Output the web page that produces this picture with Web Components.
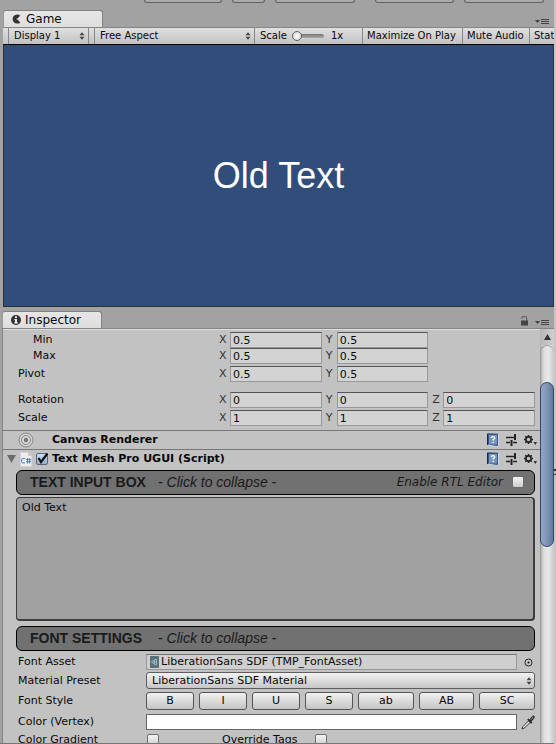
<!DOCTYPE html>
<html lang="en">
<head>
<meta charset="utf-8">
<title>Editor</title>
<style>
html{height:100%}
body{margin:0;height:100%;overflow:hidden;background:#a2a2a2;color:#090909;font:11px/16px "DejaVu Sans",Verdana,sans-serif}
</style>
</head>
<body>
<editor-window></editor-window>
<script>
const base = `*{box-sizing:border-box}button,input,select,textarea{font:inherit;color:inherit;margin:0;border-radius:0}button{padding:0;border:0;background:none}svg{display:block}`;
function define(name, css, html) {
  customElements.define(name, class extends HTMLElement {
    constructor() {
      super();
      const root = this.attachShadow({mode: 'open'});
      const t = document.createElement('template');
      t.innerHTML = `<style>${base}${css}</style>` + (typeof html === 'function' ? html(this) : html);
      root.append(t.content.cloneNode(true));
    }
  });
}
const attr = (el, n, d = '') => el.getAttribute(n) ?? d;

const icons = {
  game: [10, 10, '<path d="M8.300 1.600A4.600 4.600 0 1 0 8.300 8.400L5.500 5.600H4.600V4.500H5.500Z" fill="#333"/>'],
  info: [10, 10, '<circle cx="5" cy="5" r="5" fill="#333"/><path d="M4 1.300h2v1.600H4zM3.300 4H6v3.200h.9v1.200H3.200V7.200H4V5.200h-.7z" fill="#eee"/>'],
  menu: [14, 6, '<path d="M0 1h5L2.500 4z" fill="#444"/><path d="M6 .5h8M6 2.500h8M6 4.500h8" stroke="#444"/>'],
  lock: [9, 10, '<path d="M2 2.800V1.500Q2 .6 3 .6h2.500Q6.600.6 6.600 2v3" fill="none" stroke="#666" stroke-width="1.200"/><path d="M1 4.500h7V9.500H1z" fill="#444"/>'],
  updown: [6, 8, '<path d="M.5 3.200 3 .3 5.500 3.200zM.5 4.800 3 7.700 5.500 4.800z" fill="#444"/>'],
  canvas: [16, 16, '<circle cx="8" cy="8" r="7" fill="#d2d2d2" stroke="#888"/><circle cx="8" cy="8" r="4.500" fill="#d8d8d8" stroke="#888"/><circle cx="8" cy="8" r="2.200" fill="#777"/>'],
  script: [12, 15, '<path d="M.5.5h7.500L11.500 4v10.500H.5z" fill="#ebedf0" stroke="#d4d4d4"/><path d="M8 .5V4h3.500" fill="#c8c8c8"/><path d="M5 6.500H3Q1.500 6.500 1.500 8v1.500Q1.500 11 3 11h2M7.500 6v5.500M9.500 6v5.500M6 7.700h5M6 9.800h5" stroke="#3b7bd2" fill="none" stroke-width=".9"/>'],
  help: [13, 14, '<path d="M1 1Q1 .3 2 .3L12.500.8V12.500L11 13.700 1 12z" fill="#35547f"/><path d="M2 12 11 13.500 12.500 12.400V1" fill="none" stroke="#e6eefb" stroke-width=".8"/><path d="M3 2h8v9.500H3z" fill="#7896bd"/><path d="M1.500 1v11" stroke="#172b48"/><path d="M5.300 5Q5.400 3.700 7 3.700 8.700 3.700 8.700 5 8.700 6 7.200 6.500V7.500M7.200 8.700v1.400" stroke="#fff" fill="none" stroke-width="1.300"/>'],
  preset: [11, 12, '<path d="M0 3.500h6M0 8.500h4M7 8.500h4" stroke="#222" stroke-width="1.400"/><path d="M9 0v6M5.500 6v6" stroke="#222" stroke-width="2"/><path d="M6 3.500h4" stroke="#222" stroke-width="1.400"/>'],
  gear: [13, 11, '<circle cx="4.500" cy="4.500" r="2.600" fill="none" stroke="#222" stroke-width="1.600"/><path d="M4.500 0v2M4.500 7v2M0 4.500h2M7 4.500h2M1.300 1.300 2.700 2.700M6.300 6.300l1.400 1.400M1.300 7.700 2.700 6.300M6.300 2.700l1.400-1.400" stroke="#222" stroke-width="1.500"/><path d="M9.500 7h3.500l-1.700 3z" fill="#333"/>'],
  fold: [9, 8, '<path d="M0 0h9L4.500 8z" fill="#6b6b6b"/>'],
  asset: [9, 12, '<path d="M0 0h9v12H0z" fill="#5c7079"/><path d="M1.500 6 5 3.500h1.500v5H5zM3.500 6h3M4.500 4.300v3.400" fill="none" stroke="#a5c3ca" stroke-width=".9"/>'],
  target: [9, 9, '<circle cx="4.500" cy="4.500" r="3.500" fill="#ccc" stroke="#222"/><circle cx="4.500" cy="4.500" r="1.100" fill="#111"/>'],
  dropper: [14, 15, '<path d="M1 14 2 11.500 8 5.500 9.500 7 3.500 13z" fill="#ececec" stroke="#222" stroke-width=".9"/><path d="M6.800 4.200 10.800 8.200" stroke="#222" stroke-width="1.700"/><path d="M8 5 11 1.300Q12.500 0 13.500 1 14.300 2 13 3.700L10 7z" fill="#333"/><path d="M10 4.500 12.300 2" stroke="#aaa" stroke-width=".8"/>'],
  up: [7, 6, '<path d="M0 6 3.500 0 7 6z" fill="#333"/>'],
  check: [13, 13, '<path d="M2.500 6 5 10 11.500 1.500" fill="none" stroke="#111" stroke-width="2.200"/>']
};
define('ed-icon', ':host{display:block;flex:none;pointer-events:none}', el => {
  const [w, h, body] = icons[attr(el, 'name')];
  return `<svg width="${w}" height="${h}" viewBox="0 0 ${w} ${h}" aria-hidden="true">${body}</svg>`;
});

define('main-toolbar', `:host{display:flex;gap:10px;height:10px;flex:none;padding:0 10px 0 144px}
button{flex:80 1 0;height:3px;border:1px solid #626262;border-top:0;border-radius:0 0 4px 4px;background:#aaa}
.play{flex-grow:78}.step{flex-grow:32}.right{margin-left:10px}`,
'<button class="play" aria-label="Pause"></button><button class="step" aria-label="Step"></button><button aria-label="Collab"></button><button class="right" aria-label="Layers"></button><button aria-label="Layout"></button>');

define('dock-tabs', `:host{display:flex;height:17px;align-items:flex-end;flex:none}
.tab{display:flex;align-items:center;gap:4px;width:100px;height:17px;padding:0 0 0 8px;border:1px solid #828282;border-bottom:0;border-left-color:#9a9a9a;border-radius:3px 3px 0 0;background:linear-gradient(#e6e6e6,#dedede);font-size:12px;line-height:16px}
.tools{margin-left:auto;display:flex;align-items:flex-end;gap:6px;padding:0 5px 2px 0}.menu{height:6px}`,
el => `<button class="tab" role="tab"><ed-icon name="${attr(el,'icon')}"></ed-icon><slot></slot></button><div class="tools"><slot name="tools"></slot><button class="menu" aria-label="Panel menu"><ed-icon name="menu"></ed-icon></button></div>`);

define('ed-select', `:host{display:grid;align-items:center;min-width:0}
select{grid-area:1/1;width:100%;height:var(--h,16px);line-height:14px;appearance:none;border:0;background:none;padding:0 14px 0 5px;outline:0}
:host([boxed]) select{border:1px solid #5e5e5e;border-radius:3px;background:linear-gradient(#f2f2f2,#c6c6c6)}
ed-icon{grid-area:1/1;justify-self:end;margin-right:3px}`,
el => `<select aria-label="${attr(el,'label')}"><option>${attr(el,'value')}</option></select><ed-icon name="updown"></ed-icon>`);

define('game-bar', `:host{display:flex;height:17px;flex:none;overflow:hidden;background:linear-gradient(#e0e0e0,#c2c2c2);border-top:1px solid #858585;font-size:10px;white-space:nowrap;line-height:16px;padding-left:5px}
.d,.s,.a,.scale{border-left:1px solid #868686}
.d{flex:0 0 80px}.s{flex:0 0 6px}.a{flex:1 1 160px}
.scale{flex:0 0 108px;display:flex;align-items:center;padding-left:5px}
label{width:32px}
input{width:32px;height:12px;appearance:none;background:none}
input::-webkit-slider-runnable-track{height:4px;border-radius:2px;background:linear-gradient(#777,#aaa)}
input::-webkit-slider-thumb{appearance:none;width:10px;height:10px;margin-top:-3px;border:1px solid #666;border-radius:50%;background:radial-gradient(#fff,#ccc)}
output{margin-left:7px}
button{padding:0 0 0 4px;text-align:left;border-left:1px solid #868686}
.m{flex:0 0 100px}.u{flex:0 0 67px}.t{flex:0 0 25px;overflow:hidden}`,
`<ed-select class="d" label="Display" value="Display 1"></ed-select><span class="s"></span><ed-select class="a" label="Aspect" value="Free Aspect"></ed-select>
<div class="scale"><label for="sc">Scale</label><input id="sc" type="range" min="1" max="5" value="1"><output for="sc">1x</output></div>
<button class="m">Maximize On Play</button><button class="u">Mute Audio</button><button class="t">Stats</button>`);

define('game-view', `:host{display:grid;place-items:center;flex:0 1 263px;background:#314d79;border:1px solid #303030;border-top:1px solid #000;color:#fff;font:36px/42px "Liberation Sans",Arial,sans-serif}`, '<slot></slot>');

define('vec-row', `:host{display:grid;grid-template-columns:minmax(60px,197px) 1fr 1fr 1fr;column-gap:4px;align-items:center;padding:0 5px 0 15px;height:16px}
:host([sub]) .n{padding-left:15px}
label{display:flex;gap:3px}label span{width:8px;color:#333}
input{flex:1;min-width:0;width:0;height:16px;padding:0 2px;line-height:14px;background:#d3d3d3;border:1px solid #989898;border-top-color:#555;outline:0}`,
el => `<span class="n">${attr(el,'label')}</span>` + attr(el,'values').split(' ').map((v, i) => `<label><span>${'XYZ'[i]}</span><input value="${v}" aria-label="${attr(el,'label')} ${'XYZ'[i]}"></label>`).join(''));

define('tick-box', `:host{display:inline-grid;flex:none}
input{grid-area:1/1;appearance:none;width:12px;height:12px;border:1px solid #6d6d6d;border-radius:2px;background:linear-gradient(#f4f4f4,#cdcdcd)}
:host([on]) input{background:linear-gradient(#c9dcf3,#8eaed6);border-color:#56677d}
ed-icon{grid-area:1/1;margin-top:-1px}`,
el => `<input type="checkbox" aria-label="${attr(el,'label')}" ${el.hasAttribute('on') ? 'checked' : ''}>${el.hasAttribute('on') ? '<ed-icon name="check"></ed-icon>' : ''}`);

define('component-head', `:host{display:flex;align-items:center;height:19px;border-top:1px solid #777;padding:0 3px 0 4px;font-weight:bold}
.lead{display:flex;align-items:center;gap:4px;width:45px;flex:none}
:host([plain]) .lead{padding-left:11px}
.tools{display:flex;align-items:center;gap:7px;margin-left:auto}`,
el => `<div class="lead">${el.hasAttribute('plain') ? '<ed-icon name="canvas"></ed-icon>' : '<button aria-label="Fold"><ed-icon name="fold"></ed-icon></button><ed-icon name="script"></ed-icon><tick-box on label="Enabled"></tick-box>'}</div><slot></slot>
<div class="tools"><button aria-label="Help"><ed-icon name="help"></ed-icon></button><button aria-label="Presets"><ed-icon name="preset"></ed-icon></button><button aria-label="Settings"><ed-icon name="gear"></ed-icon></button></div>`);

define('fold-bar', `:host{display:flex;align-items:center;height:25px;margin:0 5px 0 13px;padding:0 10px 0 13px;border:1px solid #000;border-radius:6px;background:#717171;color:#1a1a1a;font-family:"Liberation Sans",Arial,sans-serif}
button{display:flex;gap:12px;white-space:nowrap;line-height:16px;font-size:14px;text-align:left;padding-bottom:2px}b{font-weight:bold;min-width:116px}.side{margin-left:auto;padding-bottom:2px}`,
`<button><b><slot></slot></b><i>- Click to collapse -</i></button><div class="side"><slot name="side"></slot></div>`);

define('rtl-toggle', `:host{display:block}label{display:flex;align-items:center;gap:9px;font:italic 12px/16px "DejaVu Sans",Verdana,sans-serif}`,
'<label>Enable RTL Editor<tick-box label="Enable RTL Editor"></tick-box></label>');

define('text-box', `:host{display:block;margin:2px 5px 5px 13px}
textarea{display:block;width:100%;height:124px;resize:none;border:1px solid #3c3c3c;border-bottom-width:2px;border-right-width:2px;border-radius:4px;padding:2px 5px;background:#a1a1a1;outline:0}`,
el => `<textarea aria-label="Text">${attr(el,'value')}</textarea>`);

define('prop-row', `:host{display:grid;grid-template-columns:128px 1fr;align-items:center;padding:0 5px 0 15px;min-height:16px}.v{display:flex;align-items:center;min-width:0}`,
el => `<span>${attr(el,'label')}</span><div class="v"><slot></slot></div>`);

define('object-field', `:host{display:flex;flex:1;align-items:center}
.f{flex:1;display:flex;align-items:center;gap:2px;height:16px;padding:0 3px;background:#cfcfcf;border:1px solid #989898;border-top-color:#777;text-align:left;line-height:14px;white-space:nowrap}
.p{width:18px;display:grid;justify-items:end;padding-right:2px}`,
'<button class="f"><ed-icon name="asset"></ed-icon><slot></slot></button><button class="p" aria-label="Select asset"><ed-icon name="target"></ed-icon></button>');

define('style-buttons', `:host{display:flex;flex:1;gap:5px}
button{flex:48 1 0;min-width:0;height:18px;border:1px solid #555;border-radius:3px;background:linear-gradient(#f1f1f1,#c4c4c4);line-height:16px;text-align:center}
.w{flex-grow:56}`,
'<button>B</button><button>I</button><button>U</button><button>S</button><button class="w">ab</button><button class="w">AB</button><button class="w">SC</button>');

define('color-field', `:host{display:flex;flex:1;align-items:center}
input{flex:1;min-width:0;height:16px;padding:0;border:1px solid #666;background:#fff;appearance:none}
input::-webkit-color-swatch-wrapper{padding:0}input::-webkit-color-swatch{border:0}
button{width:18px;display:grid;justify-items:end}`,
'<input type="color" value="#ffffff" aria-label="Vertex color"><button aria-label="Pick color"><ed-icon name="dropper"></ed-icon></button>');

define('tick-pair', `:host{display:flex;align-items:center;padding-left:1px}label{display:flex;align-items:center;gap:18px;margin-left:63px}`,
'<tick-box label="Color Gradient"></tick-box><label>Override Tags<tick-box label="Override Tags"></tick-box></label>');

define('scroll-bar', `:host{display:flex;flex-direction:column;flex:none;width:14px;background:linear-gradient(90deg,#aaa,#dedede 30%,#e9e9e9 60%,#c9c9c9)}
button{height:16px;display:grid;place-items:center;background:linear-gradient(90deg,#b5b5b5,#d0d0d0);flex:none}
.track{flex:1;display:flex;flex-direction:column;border:1px solid #9c9c9c;border-width:1px 0 0 1px;border-radius:7px 7px 0 0}
.gap{flex:36}.thumb{flex:164;border:1px solid #33486b;border-radius:7px;background:linear-gradient(90deg,#93a7c4,#7f95b6 50%,#617799);margin-left:-1px}.rest{flex:198}`,
'<button aria-label="Scroll up"><ed-icon name="up"></ed-icon></button><div class="track"><div class="gap"></div><div class="thumb"></div><div class="rest"></div></div>');

define('inspector-view', `:host{display:flex;flex:1;min-height:0;border-top:1px solid #858585;background:#c2c2c2;overflow:hidden}
.body{flex:1;min-width:0;padding-top:3px;overflow:hidden;box-shadow:inset 0 1px #dedede}
.g2{margin-top:2px}.g10{margin-top:10px}.g3{margin-top:3px}.g4{margin-top:4px}`,
`<div class="body">
<vec-row sub label="Min" values="0.5 0.5"></vec-row>
<vec-row sub label="Max" values="0.5 0.5"></vec-row>
<vec-row class="g2" label="Pivot" values="0.5 0.5"></vec-row>
<vec-row class="g10" label="Rotation" values="0 0 0"></vec-row>
<vec-row class="g2" label="Scale" values="1 1 1"></vec-row>
<component-head plain class="g4">Canvas Renderer</component-head>
<component-head>Text Mesh Pro UGUI (Script)</component-head>
<fold-bar class="g2">TEXT INPUT BOX<rtl-toggle slot="side"></rtl-toggle></fold-bar>
<text-box value="Old Text"></text-box>
<fold-bar>FONT SETTINGS</fold-bar>
<prop-row class="g3" label="Font Asset"><object-field>LiberationSans SDF (TMP_FontAsset)</object-field></prop-row>
<prop-row class="g2" label="Material Preset"><ed-select boxed label="Material Preset" value="LiberationSans SDF Material" style="flex:1;--h:17px"></ed-select></prop-row>
<prop-row class="g3" label="Font Style"><style-buttons></style-buttons></prop-row>
<prop-row class="g4" label="Color (Vertex)"><color-field></color-field></prop-row>
<prop-row class="g2" label="Color Gradient"><tick-pair></tick-pair></prop-row>
</div><scroll-bar></scroll-bar>`);

/* The handle lies over the window's right edge. */
define('edge-handle', ':host{position:absolute;right:0;top:63%;width:2px;height:6px;border:solid #333;border-width:2px 0 1px;background:#bbb}', '');

define('editor-window', `:host{display:flex;flex-direction:column;height:100%;border-right:2px solid #c6c6c6;box-sizing:border-box}
.dock{display:flex;flex-direction:column;padding:0 0 0 3px;min-height:0}
.insp{flex:1;padding:4px 0 0 2px;border-bottom:1px solid #777}
.insp inspector-view{border-left:1px solid #858585}`,
`<main-toolbar></main-toolbar>
<section class="dock"><dock-tabs icon="game">Game</dock-tabs><game-bar></game-bar><game-view>Old Text</game-view></section>
<section class="dock insp"><dock-tabs icon="info">Inspector<ed-icon slot="tools" name="lock"></ed-icon></dock-tabs><inspector-view></inspector-view></section><edge-handle></edge-handle>`);
</script>
</body>
</html>
